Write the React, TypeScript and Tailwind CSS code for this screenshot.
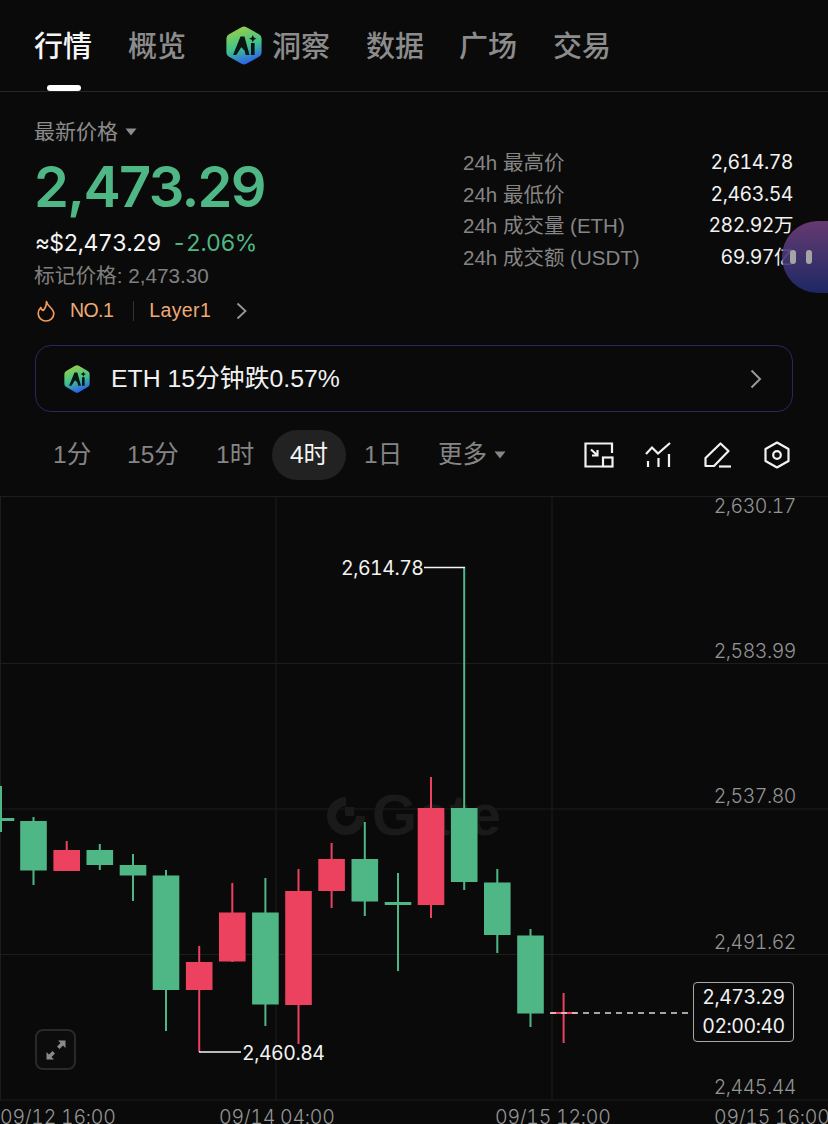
const FONT = "font-['Liberation_Sans','Noto_Sans_CJK_SC',sans-serif]";
const NUM_FONT = "font-['Inter','Noto_Sans_CJK_SC',sans-serif] tabular-nums tracking-[-0.025em]";
const TIME_FONT = "font-['Inter',sans-serif] tabular-nums tracking-[-0.012em]";

const candles = [
  { x: 1, top: 818, bottom: 821, wickTop: 786, wickBottom: 832, up: true },
  { x: 33.5, top: 821, bottom: 870.5, wickTop: 817, wickBottom: 885, up: true },
  { x: 66.7, top: 850, bottom: 871, wickTop: 841, wickBottom: 871, up: false },
  { x: 99.8, top: 850, bottom: 865, wickTop: 844, wickBottom: 870, up: true },
  { x: 133, top: 865, bottom: 875.5, wickTop: 854, wickBottom: 901, up: true },
  { x: 166, top: 875.5, bottom: 990, wickTop: 870, wickBottom: 1031, up: true },
  { x: 199.2, top: 962, bottom: 990, wickTop: 946, wickBottom: 1052, up: false },
  { x: 232.3, top: 912.5, bottom: 961.5, wickTop: 883, wickBottom: 962, up: false },
  { x: 265.4, top: 912.5, bottom: 1004.5, wickTop: 878, wickBottom: 1026, up: true },
  { x: 298.5, top: 891, bottom: 1005, wickTop: 869, wickBottom: 1044, up: false },
  { x: 331.6, top: 859, bottom: 891, wickTop: 843, wickBottom: 908, up: false },
  { x: 364.8, top: 859, bottom: 901.5, wickTop: 822, wickBottom: 916, up: true },
  { x: 398, top: 902, bottom: 905, wickTop: 873, wickBottom: 971, up: true },
  { x: 431, top: 808, bottom: 905, wickTop: 777, wickBottom: 918, up: false },
  { x: 464.2, top: 808, bottom: 882, wickTop: 567, wickBottom: 890, up: true },
  { x: 497.3, top: 882.5, bottom: 935, wickTop: 869, wickBottom: 953, up: true },
  { x: 530.5, top: 935.5, bottom: 1013.5, wickTop: 929, wickBottom: 1027, up: true },
  { x: 563.6, top: 1012, bottom: 1014, wickTop: 993, wickBottom: 1043, up: false },
];

const priceLabels = [
  { y: 513, text: "2,630.17" },
  { y: 658, text: "2,583.99" },
  { y: 803, text: "2,537.80" },
  { y: 949, text: "2,491.62" },
  { y: 1094, text: "2,445.44" },
];

const timeLabels = [
  { x: 0, text: "09/12 16:00" },
  { x: 219, text: "09/14 04:00" },
  { x: 495, text: "09/15 12:00" },
  { x: 714, text: "09/15 16:00" },
];

const stats = [
  { label: "24h 最高价", value: "2,614.78" },
  { label: "24h 最低价", value: "2,463.54" },
  { label: "24h 成交量 (ETH)", value: "282.92万" },
  { label: "24h 成交额 (USDT)", value: "69.97亿" },
];

function AiLogo({ id, className }: { id: string; className: string }) {
  return (
    <svg viewBox="0 0 36 39" className={className}>
      <defs>
        <linearGradient id={id} x1="0.25" y1="0" x2="0.55" y2="1">
          <stop offset="0" stopColor="#9ccf45" />
          <stop offset="0.55" stopColor="#3fc38d" />
          <stop offset="1" stopColor="#2a5cf0" />
        </linearGradient>
      </defs>
      <path
        d="M15.5 1.2a5 5 0 0 1 5 0l12.5 7a5 5 0 0 1 2.6 4.4v13.8a5 5 0 0 1-2.6 4.4l-12.5 7a5 5 0 0 1-5 0l-12.5-7a5 5 0 0 1-2.6-4.4V12.6a5 5 0 0 1 2.6-4.4z"
        fill={`url(#${id})`}
      />
      <path d="M14.5 10.5h4l5 18.5h-3.8l-1-4.2-3.4-3.6-5 7.8H7z" fill="#0b1512" />
      <rect x="25" y="17" width="3.6" height="12" fill="#0b1512" />
      <path d="M26.8 9l1.1 2.6 2.6 1.1-2.6 1.1-1.1 2.6-1.1-2.6-2.6-1.1 2.6-1.1z" fill="#0b1512" />
    </svg>
  );
}

function Caret({ className }: { className: string }) {
  return (
    <svg viewBox="0 0 12 8" className={className}>
      <path d="M0.5 0.5h11L6 7.5z" fill="currentColor" />
    </svg>
  );
}

function Chart() {
  return (
    <div className="relative flex-1">
      <svg viewBox="0 496 828 628" className="absolute inset-0 h-full w-full overflow-visible">
        <g stroke="#1d1d1d" strokeWidth="1">
          <path d="M0 496.5H828M0 663.5H828M0 809H828M0 954.5H828M0 1100H828" />
          <path d="M276 496V1100M552 496V1100M0.5 496V1100" />
        </g>

        {/* watermark */}
        <g fill="#1a1a1a">
          <path d="M346 801.500A14.500 14.500 0 1 0 360.500 816" fill="none" stroke="#1a1a1a" strokeWidth="9" />
          <rect x="345" y="807" width="9" height="9" />
          <text x="372" y="835" fontSize="58" fontWeight="700" className={FONT}>
            Gate
          </text>
        </g>

        {candles.map((c) => {
          const color = c.up ? "#4fb785" : "#ec425f";
          return (
            <g key={c.x} fill={color}>
              <rect x={c.x - 1} y={c.wickTop} width="2" height={c.wickBottom - c.wickTop} />
              <rect x={c.x - 13.3} y={c.top} width="26.6" height={c.bottom - c.top} />
            </g>
          );
        })}

        <path d="M550 1013H693" stroke="#d8d8d8" strokeWidth="1.3" strokeDasharray="6 5" />

        <path d="M424 567.500H465M199 1052H241" stroke="#f5f5f5" strokeWidth="1.6" />
        <text x="341" y="575" fontSize="19.500" fill="#f2f2f2" className={NUM_FONT}>
          2,614.78
        </text>
        <text x="242" y="1060" fontSize="19.500" fill="#f2f2f2" className={NUM_FONT}>
          2,460.84
        </text>

        {priceLabels.map((l) => (
          <text key={l.text} x="796" y={l.y} textAnchor="end" fontSize="19.500" fontWeight="300" fill="#959595" className={NUM_FONT}>
            {l.text}
          </text>
        ))}
        {timeLabels.map((l) => (
          <text key={l.text} x={l.x} y="1124" fontSize="19.500" fontWeight="300" fill="#959595" className={TIME_FONT}>
            {l.text}
          </text>
        ))}
      </svg>

      <button className="absolute left-[35px] top-[533px] flex h-[41px] w-[41px] items-center justify-center rounded-lg border-2 border-[#292929] bg-[#0c0c0c]">
        <svg viewBox="0 0 20 20" className="h-5 w-5 text-[#8a8a8a]">
          <path d="M12 0.500h7.500V8L17 5.500 13.500 9 11 6.500 14.500 3z" fill="currentColor" />
          <path d="M8 19.500H0.500V12L3 14.500 6.500 11 9 13.500 5.500 17z" fill="currentColor" />
        </svg>
      </button>

      <div className={`absolute left-[693px] top-[486px] flex h-[60px] w-[101px] flex-col items-center justify-center rounded border border-[#a8a8a8] bg-[#0a0a0a] text-[19.5px] leading-[29px] text-[#f2f2f2] ${NUM_FONT}`}>
        <span>2,473.29</span>
        <span>02:00:40</span>
      </div>
    </div>
  );
}

export default function App() {
  return (
    <div className={`relative flex h-[1124px] w-[828px] flex-col overflow-hidden bg-[#0a0a0a] ${FONT}`}>
      <header className="relative flex h-[92px] shrink-0 items-start border-b border-[#262626] pl-[34px] pt-[26px] text-[29px] font-medium leading-[42px] text-[#8c8c8c]">
        <span className="w-[94px] text-[#f5f5f5]">行情</span>
        <span className="w-[98px]">概览</span>
        <AiLogo id="logo-tab" className="h-[39px] w-[36px]" />
        <span className="ml-[10px] w-[94px]">洞察</span>
        <span className="w-[93px]">数据</span>
        <span className="w-[94px]">广场</span>
        <span>交易</span>
        <div className="absolute bottom-0 left-[47px] h-[6px] w-[34px] rounded-full bg-white" />
      </header>

      <section className="flex h-[253px] shrink-0 justify-between pl-[35px] pr-[35px]">
        <div className="flex flex-col">
          <div className="mt-[26px] flex h-[28px] items-center gap-[7px] text-[21px] text-[#8c8c8c]">
            <span className="-ml-[1px]">最新价格</span>
            <Caret className="h-[8px] w-[12px]" />
          </div>
          <div className="-ml-[1px] mt-[11px] h-[60px] font-['Inter',sans-serif] text-[56px] font-semibold leading-[60px] tracking-[-0.03em] text-[#4fb785]">
            2,473.29
          </div>
          <div className={`mt-[11px] flex h-[30px] items-center gap-[11px] text-[23px] leading-[30px] ${NUM_FONT}`}>
            <span className="text-[#f5f5f5]">≈$2,473.29</span>
            <span className="text-[#4fb785]">-2.06%</span>
          </div>
          <div className="-ml-[1px] mt-[6px] h-[24px] text-[20.7px] leading-[24px] text-[#808080]">标记价格: 2,473.30</div>
          <div className="mt-[11px] flex h-[24px] items-center text-[19.5px] text-[#eeaa76]">
            <svg viewBox="0 0 18 22" fill="none" className="ml-[2px] h-[22px] w-[18px] stroke-[#f09a5c]">
              <path
                d="M9.500 1.500C10 6 16.800 8.500 16.800 13.500A7.800 7.500 0 0 1 1.200 13.500C1.200 11 2.300 9 3.800 7.500C4.300 9.500 5.200 10.300 6.300 10.300C8.500 8 9.500 5 9.500 1.500Z"
                strokeWidth="1.7"
                strokeLinejoin="round"
              />
            </svg>
            <span className="ml-[15px] tracking-[-0.03em]">NO.1</span>
            <div className="ml-[20px] h-[20px] w-px bg-[#333333]" />
            <span className="ml-[15px] tracking-[0.02em]">Layer1</span>
            <svg viewBox="0 0 11 18" fill="none" className="ml-[25px] h-[18px] w-[11px] stroke-[#999999]">
              <path d="M1.500 1.500L9.500 9L1.500 16.500" strokeWidth="1.8" />
            </svg>
          </div>
        </div>

        <div className="mt-[55px] flex w-[330px] flex-col text-[20.5px] leading-[31.7px]">
          {stats.map((s) => (
            <div key={s.label} className="flex justify-between">
              <span className="text-[#858585]">{s.label}</span>
              <span className={`text-[19.5px] text-[#f2f2f2] ${NUM_FONT}`}>{s.value}</span>
            </div>
          ))}
        </div>
      </section>

      <div className="mx-[35px] flex h-[67px] shrink-0 items-center justify-between rounded-2xl border border-[#30245e] pl-[28px] pr-[30px]">
        <div className="flex items-center">
          <AiLogo id="logo-card" className="h-[28px] w-[26px]" />
          <span className="ml-[21px] text-[24.8px] text-[#f2f2f2]">ETH 15分钟跌0.57%</span>
        </div>
        <svg viewBox="0 0 12 20" fill="none" className="h-[20px] w-[12px] stroke-[#999999]">
          <path d="M1.500 1.500L10 10L1.500 18.500" strokeWidth="2" />
        </svg>
      </div>

      <div className="flex h-[84px] shrink-0 items-center pl-[53px] pt-[2px] text-[24.5px] text-[#858585]">
        <span className="w-[74px]">1分</span>
        <span className="w-[89px]">15分</span>
        <span className="w-[56px]">1时</span>
        <span className="flex h-[50px] w-[74px] items-center justify-center rounded-full bg-[#222222] text-[#f5f5f5]">
          4时
        </span>
        <span className="ml-[18px] w-[74px]">1日</span>
        <span>更多</span>
        <Caret className="ml-[7px] h-[8px] w-[12px]" />

        <svg viewBox="0 0 30 26" fill="none" stroke="#f2f2f2" strokeWidth="2.2" className="ml-[78px] h-[26px] w-[30px]">
          <path d="M18 24.500H1.500V1.500H28V11" />
          <rect x="19" y="15.500" width="9.500" height="9" />
          <path d="M7 7.500L13 13M13.500 8V13.500H8" />
        </svg>
        <svg viewBox="0 0 26 26" fill="none" stroke="#f2f2f2" strokeWidth="2.2" className="ml-[31px] h-[26px] w-[26px]">
          <path d="M1 12L7 5.500L13 11.500L25 1" />
          <path d="M3 19V25M13.500 16V25M24 12V25" />
        </svg>
        <svg viewBox="0 0 27 26" fill="none" stroke="#f2f2f2" strokeWidth="2.2" className="ml-[33px] h-[26px] w-[27px]">
          <path d="M1.500 24V16L16.500 1.500L24.500 9L10 24Z" strokeLinejoin="round" />
          <path d="M15 24.500H27" />
        </svg>
        <svg viewBox="0 0 26 28" fill="none" stroke="#f2f2f2" strokeWidth="2.2" className="ml-[33px] h-[28px] w-[26px]">
          <path d="M13 1.500L24.500 8V20L13 26.500L1.500 20V8Z" strokeLinejoin="round" />
          <circle cx="13" cy="14" r="3.800" />
        </svg>
      </div>

      <Chart />

      <div className="absolute left-[782px] top-[221px] flex h-[72px] w-[46px] items-center gap-[10px] rounded-l-full bg-gradient-to-b from-[#6f3f7c]/90 to-[#1e2a6e]/90 pl-[8px]">
        <div className="h-[14px] w-[6px] rounded-full bg-[#a5a5a5]" />
        <div className="h-[14px] w-[6px] rounded-full bg-[#a5a5a5]" />
      </div>
    </div>
  );
}
